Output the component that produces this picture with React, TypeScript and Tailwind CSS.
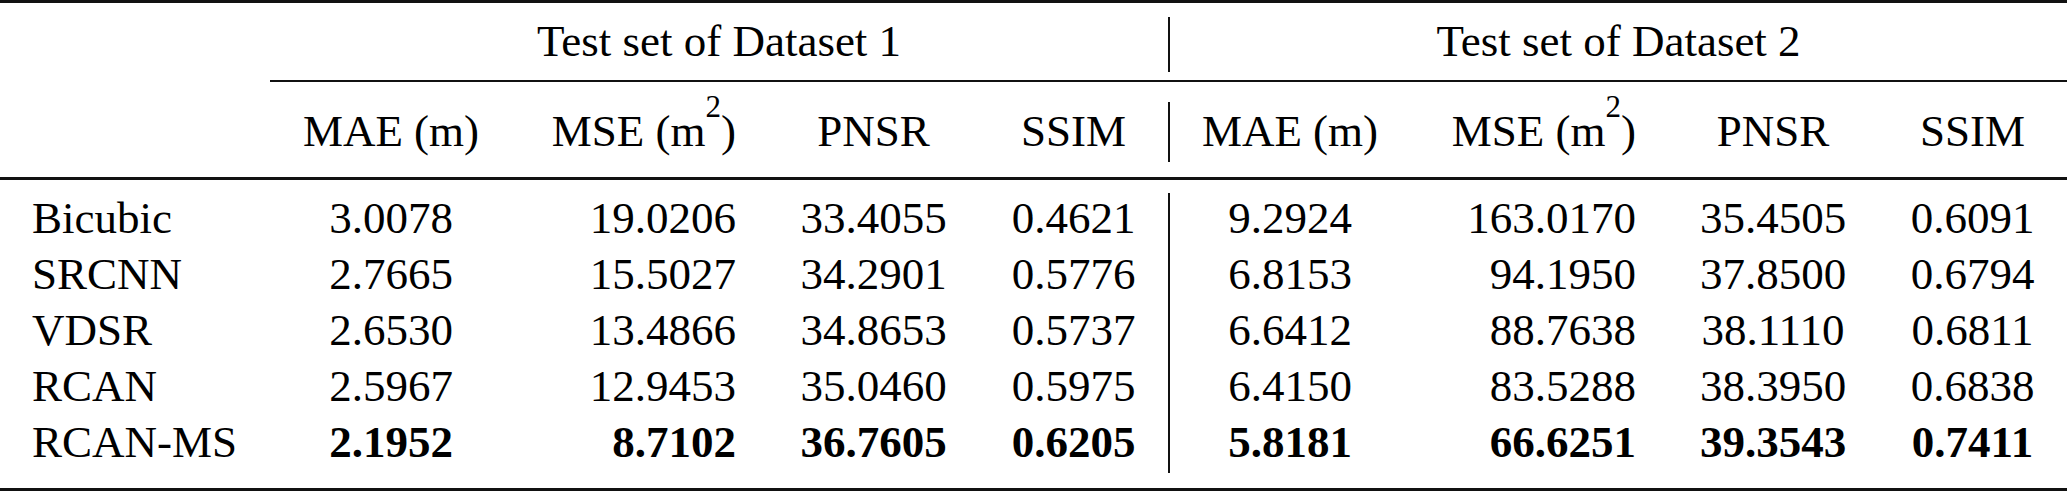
import React from "react";

const GRID =
  "grid grid-cols-[270px_242px_256px_211px_189px_242px_258px_210px_189px]";

const ALIGN = [
  "text-left pl-[32px]",
  "text-center",
  "text-right pr-[32px]",
  "text-center",
  "text-center",
  "text-center border-l-2 border-[#111]",
  "text-right pr-[32px]",
  "text-center",
  "text-center",
];

const rows: { name: string; vals: string[]; bold?: boolean }[] = [
  { name: "Bicubic", vals: ["3.0078", "19.0206", "33.4055", "0.4621", "9.2924", "163.0170", "35.4505", "0.6091"] },
  { name: "SRCNN", vals: ["2.7665", "15.5027", "34.2901", "0.5776", "6.8153", "94.1950", "37.8500", "0.6794"] },
  { name: "VDSR", vals: ["2.6530", "13.4866", "34.8653", "0.5737", "6.6412", "88.7638", "38.1110", "0.6811"] },
  { name: "RCAN", vals: ["2.5967", "12.9453", "35.0460", "0.5975", "6.4150", "83.5288", "38.3950", "0.6838"] },
  { name: "RCAN-MS", vals: ["2.1952", "8.7102", "36.7605", "0.6205", "5.8181", "66.6251", "39.3543", "0.7411"], bold: true },
];

function Mse() {
  return (
    <>
      MSE (m<span className="text-[31px] align-[29px] leading-[0]">2</span>)
    </>
  );
}

export default function App() {
  const headers: React.ReactNode[] = [
    "",
    "MAE (m)",
    <Mse key="a" />,
    "PNSR",
    "SSIM",
    "MAE (m)",
    <Mse key="b" />,
    "PNSR",
    "SSIM",
  ];
  return (
    <div className="w-[2067px] h-[492px] bg-white text-black [font-family:Liberation_Serif,Times_New_Roman,serif] text-[45px] whitespace-nowrap flex flex-col">
      {/* top rule */}
      <div className="h-[3px] bg-[#111]" />

      {/* group header row */}
      <div className="grid grid-cols-[1168px_899px] pt-[14px] pb-[8px]">
        <div className="h-[55px] pl-[270px] text-center leading-[48px]">Test set of Dataset 1</div>
        <div className="h-[55px] border-l-2 border-[#111] text-center leading-[48px]">Test set of Dataset 2</div>
      </div>

      {/* cmidrule */}
      <div className="h-[2px] ml-[270px] bg-[#111]" />

      {/* metric header row */}
      <div className={`${GRID} pt-[20px] pb-[15px]`}>
        {headers.map((h, i) => (
          <div key={i} className={`h-[60px] leading-[58px] ${ALIGN[i]}`}>
            {h}
          </div>
        ))}
      </div>

      {/* midrule */}
      <div className="h-[3px] bg-[#111]" />

      {/* body */}
      <div className="flex flex-col pt-[13px] pb-[15px]">
        {rows.map((r) => (
          <div key={r.name} className={GRID}>
            <div className={`h-[56px] leading-[50px] ${ALIGN[0]}`}>{r.name}</div>
            {r.vals.map((v, i) => (
              <div
                key={i}
                className={`h-[56px] leading-[50px] ${ALIGN[i + 1]} ${r.bold ? "font-bold" : ""}`}
              >
                {v}
              </div>
            ))}
          </div>
        ))}
      </div>

      {/* bottom rule */}
      <div className="h-[3px] bg-[#111]" />
    </div>
  );
}
